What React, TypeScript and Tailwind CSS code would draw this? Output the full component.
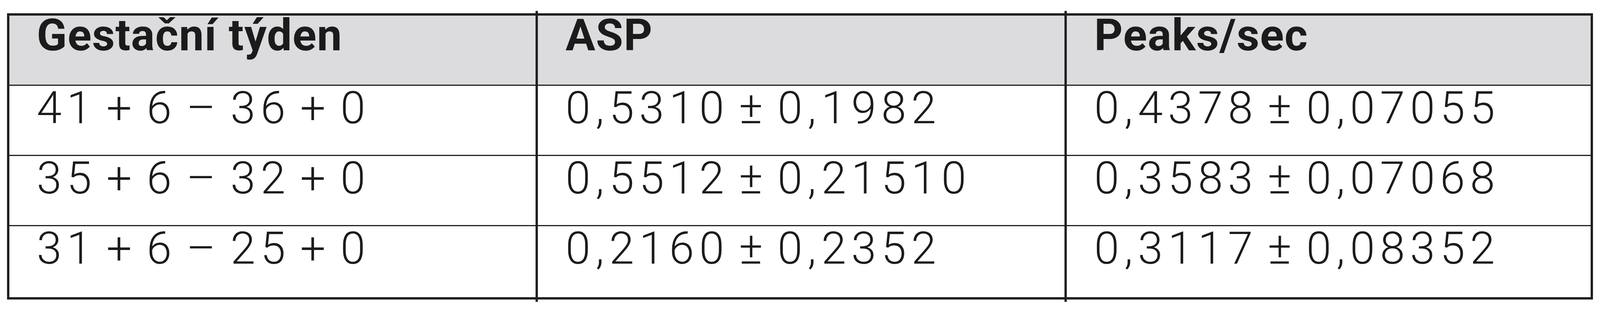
import React from 'react';

const headers = ['Gestační týden', 'ASP', 'Peaks/sec'];

const rows = [
  ['41 + 6 – 36 + 0', '0,5310 ± 0,1982', '0,4378 ± 0,07055'],
  ['35 + 6 – 32 + 0', '0,5512 ± 0,21510', '0,3583 ± 0,07068'],
  ['31 + 6 – 25 + 0', '0,2160 ± 0,2352', '0,3117 ± 0,08352'],
];

// body row heights incl. the 6px rule under each row
const rowHeights = ['h-[183px]', 'h-[183px]', 'h-[188px]'];

// horizontal sizes are in vw so the table keeps the 5343px proportions
const Column: React.FC<{ index: number }> = ({ index }) => {
  const first = index === 0;
  const last = index === headers.length - 1;

  return (
    <div
      className={
        first
          ? 'min-w-0 pt-[6px]'
          : 'min-w-0 border-l-[6px] border-[#231f20] pt-[6px] pb-[6px]'
      }
    >
      {/* Header cell */}
      <div
        className={`h-[189px] bg-[#dcdcde] border-t-[6px] border-b-[6px] border-[#231f20] pl-[1.72vw] ${
          first ? 'border-l-[6px]' : ''
        } ${last ? 'border-r-[6px]' : ''}`}
      >
        <span className="block -mt-[6px] text-[2.77vw] leading-none font-bold tracking-[0.037vw] text-[#1c1a1b] whitespace-nowrap">
          {headers[index]}
        </span>
      </div>

      {/* Body cells */}
      {rows.map((row, r) => (
        <div
          key={r}
          className={`${rowHeights[r]} bg-white border-b-[6px] border-[#231f20] pl-[1.72vw] ${
            first ? 'border-l-[6px]' : ''
          } ${last ? 'border-r-[6px]' : ''}`}
        >
          <span className="block -mt-[3px] text-[2.807vw] leading-none font-light tracking-[0.318vw] [word-spacing:-0.393vw] text-[#1c1a1b] whitespace-nowrap">
            {row[index]}
          </span>
        </div>
      ))}
    </div>
  );
};

const App: React.FC = () => {
  return (
    <div className="w-full h-[800px] bg-white pt-[28px] pl-[0.43vw] font-['Roboto',sans-serif]">
      <div className="grid grid-cols-3 items-start w-[99.14vw]">
        {headers.map((_, i) => (
          <Column key={i} index={i} />
        ))}
      </div>
    </div>
  );
};

export default App;
